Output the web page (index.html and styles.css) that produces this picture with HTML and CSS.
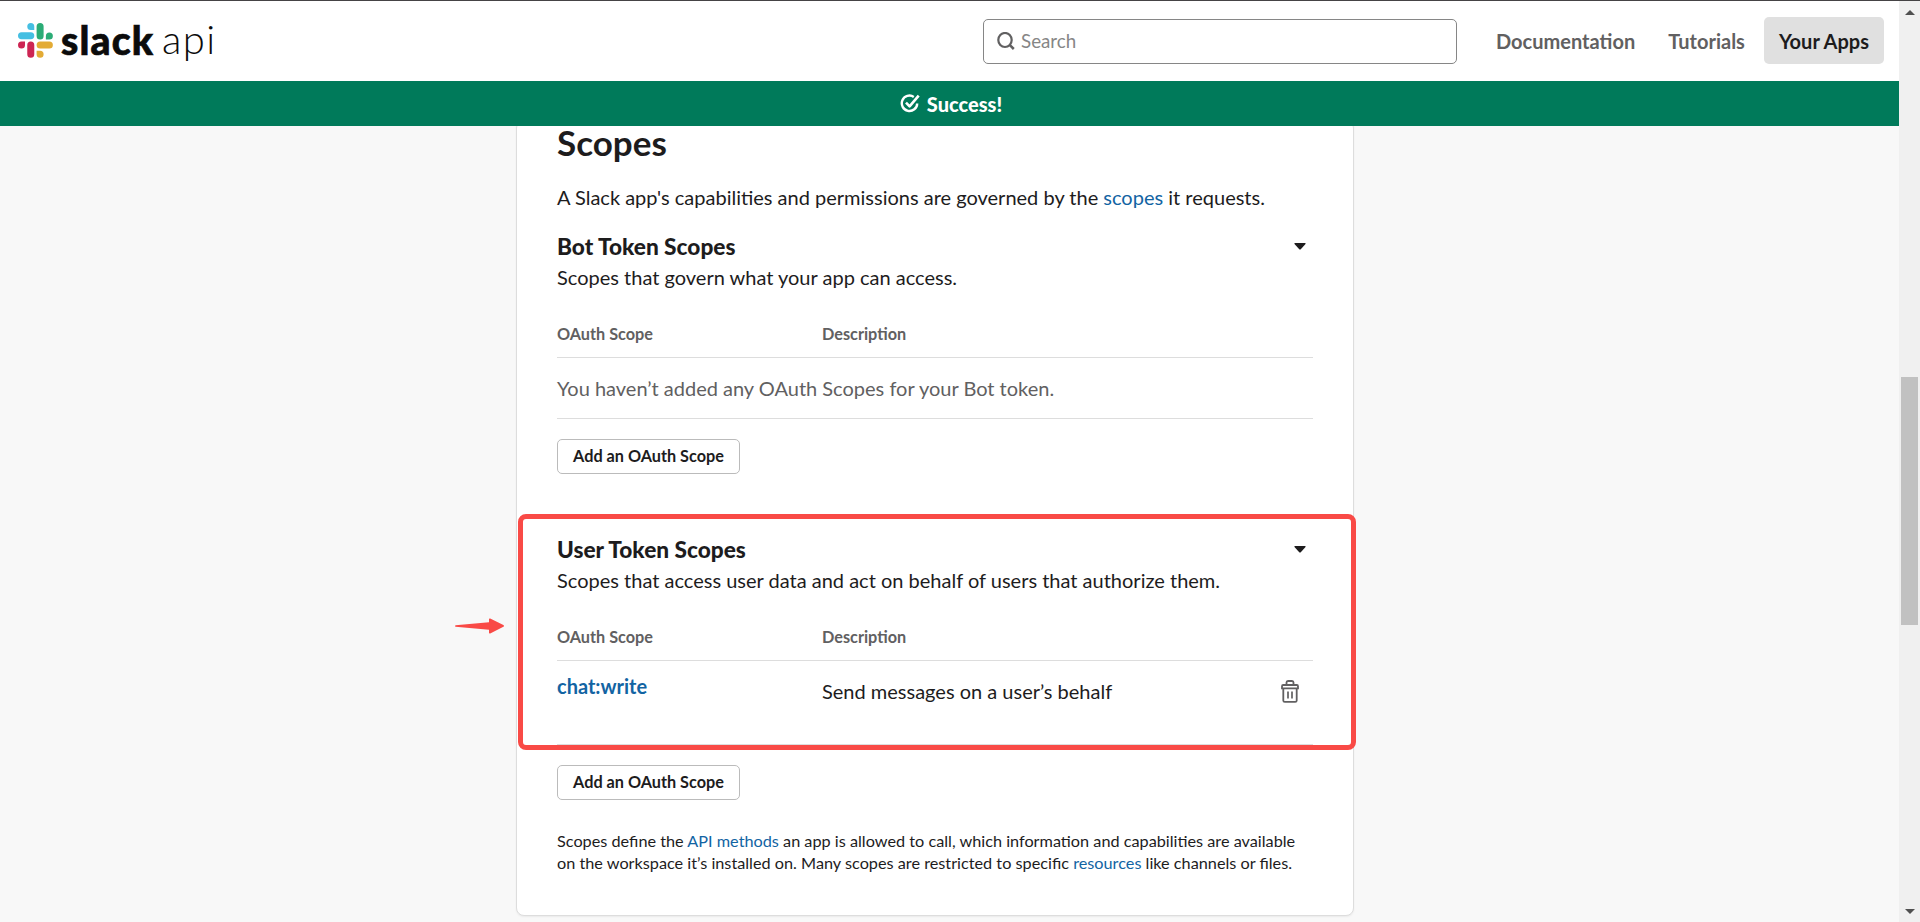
FILE: index.html
```html
<!DOCTYPE html>
<html lang="en">
<head>
<meta charset="utf-8">
<title>Slack API: OAuth &amp; Permissions</title>
<link rel="stylesheet" href="styles.css">
</head>
<body>
<div class="page">
  <header class="header">
    <a class="logo">
      <svg class="logo-mark" viewBox="0 0 54 54" width="35" height="35" aria-hidden="true">
        <path fill="#45bfe2" d="M19.7.1a5.4 5.4 0 0 0 0 10.8h5.4V5.5A5.4 5.4 0 0 0 19.7.1m0 14.3H5.4a5.4 5.4 0 0 0 0 10.8h14.3a5.4 5.4 0 0 0 0-10.8"/>
        <path fill="#2bac76" d="M53.8 19.9a5.4 5.4 0 1 0-10.8 0v5.4h5.4a5.4 5.4 0 0 0 5.4-5.4m-14.3 0V5.5a5.4 5.4 0 1 0-10.8 0v14.4a5.4 5.4 0 1 0 10.8 0"/>
        <path fill="#e3ab35" d="M34.1 53.7a5.4 5.4 0 0 0 0-10.8h-5.4v5.4a5.4 5.4 0 0 0 5.4 5.4m0-14.3h14.3a5.4 5.4 0 0 0 0-10.8H34.1a5.4 5.4 0 0 0 0 10.8"/>
        <path fill="#cd2553" d="M0 33.9a5.4 5.4 0 1 0 10.8 0v-5.4H5.4A5.4 5.4 0 0 0 0 33.9m14.3 0v14.4a5.4 5.4 0 1 0 10.8 0V33.9a5.4 5.4 0 1 0-10.8 0"/>
      </svg>
      <span class="logo-slack">slack</span><span class="logo-api">api</span>
    </a>
    <div class="search">
      <svg class="search-icon" viewBox="0 0 18 18" width="18" height="18" aria-hidden="true"><ellipse cx="8" cy="8" rx="6.7" ry="7" fill="none" stroke="#616061" stroke-width="2.2"/><path d="M12.4 12.6l4.4 4.4" stroke="#616061" stroke-width="2.5"/></svg>
      <span>Search</span>
    </div>
    <nav class="nav">
      <a class="nav-link">Documentation</a>
      <a class="nav-link">Tutorials</a>
      <a class="nav-link nav-apps">Your Apps</a>
    </nav>
  </header>
  <div class="banner">
    <svg class="banner-icon" viewBox="0 0 20 20" width="20" height="20" aria-hidden="true"><path d="M13.8 2.9A7.7 7.7 0 1 0 17.2 9.4" fill="none" stroke="#fff" stroke-width="2.4"/><path d="M6 8.6l3.6 3.8L18.7 1.6" fill="none" stroke="#fff" stroke-width="2.6" stroke-linejoin="round"/></svg>
    <span>Success!</span>
  </div>
  <main class="main">
    <section class="card">
      <h1 class="title">Scopes</h1>
      <p class="intro">A Slack app's capabilities and permissions are governed by the <a>scopes</a> it requests.</p>

      <div class="scope-group">
        <div class="group-head"><h2>Bot Token Scopes</h2><svg class="caret" viewBox="0 0 12 7" width="12" height="7"><path d="M1 0h10q1 0 .5 1L7 6q-1 1-2 0L.5 1Q0 0 1 0z" fill="#1d1c1d"/></svg></div>
        <p>Scopes that govern what your app can access.</p>
        <div class="columns"><span>OAuth Scope</span><span>Description</span></div>
        <div class="empty-row">You haven’t added any OAuth Scopes for your Bot token.</div>
        <button class="btn">Add an OAuth Scope</button>
      </div>

      <div class="scope-group user-group">
        <div class="group-head"><h2>User Token Scopes</h2><svg class="caret" viewBox="0 0 12 7" width="12" height="7"><path d="M1 0h10q1 0 .5 1L7 6q-1 1-2 0L.5 1Q0 0 1 0z" fill="#1d1c1d"/></svg></div>
        <p>Scopes that access user data and act on behalf of users that authorize them.</p>
        <div class="columns"><span>OAuth Scope</span><span>Description</span></div>
        <div class="scope-row">
          <a class="scope-name">chat:write</a>
          <span class="scope-desc">Send messages on a user’s behalf</span>
          <svg class="trash" viewBox="0 0 18 23" width="18" height="23" aria-hidden="true"><g fill="none" stroke="#616061"><path d="M5.5 4.5V2.6q0-1.6 1.5-1.6h4q1.5 0 1.5 1.6v1.9" stroke-width="1.8"/><path d="M1 8.4V6.2q0-1.2 1.2-1.2h13.6q1.2 0 1.2 1.2v2.2z" stroke-width="1.8"/><path d="M2.3 9v11.4q0 1.5 1.5 1.5h10.4q1.5 0 1.5-1.5V9" stroke-width="1.8"/><path d="M7 11.5v7M11 11.5v7" stroke-width="1.7"/></g></svg>
        </div>
        <button class="btn">Add an OAuth Scope</button>
        <div class="highlight"></div>
        <svg class="arrow" viewBox="0 0 50 16" width="50" height="16" aria-hidden="true"><path d="M.5 7.2L34 4.3V1.3Q34 .2 35.2.6L48.4 7.1Q49.6 8 48.4 8.8L35.2 15.4Q34 15.8 34 14.7V11.8L.5 8.8Q-.3 8 .5 7.2z" fill="#f94a46"/></svg>
      </div>

      <p class="note">Scopes define the <a>API methods</a> an app is allowed to call, which information and capabilities are available on the workspace it’s installed on. Many scopes are restricted to specific <a>resources</a> like channels or files.</p>
    </section>
  </main>
</div>
<div class="scrollbar">
  <i class="scroll-up"></i>
  <i class="scroll-thumb"></i>
  <i class="scroll-down"></i>
</div>
</body>
</html>
```
FILE: styles.css
```css
* { box-sizing: border-box; }

body {
  margin: 0;
  height: 922px;
  display: flex;
  overflow: hidden;
  border-top: 1px solid #454345;
  background: #f8f8f8;
  color: #1d1c1d;
  font: 400 20px/30px Lato, sans-serif;
}

h1, h2, p { margin: 0; }
a { color: #1264a3; text-decoration: none; }

.page { width: 1899px; height: 921px; display: flex; flex-direction: column; }

.header {
  height: 80px;
  flex: none;
  display: flex;
  align-items: center;
  padding: 0 15px 2px 18px;
  background: #fff;
}

.logo { display: flex; align-items: center; color: #0b0b0b; line-height: 44px; }
.logo-mark { margin-right: 8px; }
.logo-slack { width: 101px; font-size: 39px; font-weight: 900; letter-spacing: 1.2px; -webkit-text-stroke: .7px #0b0b0b; }
.logo-api { margin-bottom: 2px; font-size: 40px; font-weight: 300; letter-spacing: 1.4px; }

.search {
  width: 474px;
  height: 45px;
  margin: 2px 0 0 auto;
  padding: 0 0 0 13px;
  display: flex;
  align-items: center;
  gap: 6px;
  border: 1px solid #868686;
  border-radius: 5px;
  color: #868686;
  font-size: 18.75px;
}

.nav { display: flex; margin-left: 24px; }
.nav-link {
  height: 47px;
  padding: 0 15px;
  color: #616061;
  font-weight: 700;
  line-height: 49px;
}
.nav-link + .nav-link { margin-left: 3px; }
.nav-link.nav-apps { margin-left: 4px; color: #1d1c1d; background: #e0e0e0; border-radius: 5px; }

.banner {
  height: 45px;
  flex: none;
  display: flex;
  justify-content: center;
  padding: 12px 0 0 3px;
  gap: 7px;
  background: #007a5a;
  color: #fff;
  font-weight: 900;
  line-height: 23px;
}
.banner-icon { margin-top: 1px; }

.main { flex: 1; min-height: 0; overflow: hidden; }

.card {
  width: 838px;
  height: 796px;
  margin: -6px 0 0 516px;
  padding: 0 40px;
  background: #fff;
  border: 1px solid #ddd;
  border-radius: 8px;
  box-shadow: 0 1px 2px rgba(0, 0, 0, .06);
}

.title { font-size: 35px; line-height: 42px; font-weight: 700; }
.intro { margin: 19px 0 18px; }

.scope-group { position: relative; }
.group-head { display: flex; justify-content: space-between; height: 32px; padding-right: 7px; }
.group-head h2 { padding-top: 1px; font-size: 22.65px; line-height: 32px; font-weight: 900; }
.caret { margin-top: 13px; }

.columns {
  display: grid;
  grid-template-columns: 265px 1fr;
  height: 36px;
  margin-top: 30px;
  border-bottom: 1px solid #ddd;
  color: #616061;
  font-size: 16.25px;
  font-weight: 700;
  line-height: 24px;
}

.empty-row { padding: 15px 0; border-bottom: 1px solid #ddd; color: #616061; }

.btn {
  display: block;
  width: 183px;
  height: 35px;
  margin-top: 20px;
  padding: 0 0 2px;
  border: 1px solid #bbb;
  border-radius: 5px;
  background: #fff;
  color: #1d1c1d;
  font: 700 16.25px/31px Lato, sans-serif;
}

.user-group { margin-top: 59px; }

.scope-row {
  display: grid;
  grid-template-columns: 265px 1fr 32px;
  height: 84px;
  padding-top: 10px;
  border-bottom: 1px solid #ddd;
}
.scope-name { font-weight: 700; }
.scope-desc { padding-top: 5px; }
.trash { margin-top: 9px; }

.highlight {
  position: absolute;
  left: -39px;
  top: -19px;
  width: 838px;
  height: 236px;
  border: 5px solid #f94a46;
  border-radius: 8px;
}
.arrow { position: absolute; left: -102px; top: 85px; }

.note { margin-top: 30px; font-size: 16.25px; line-height: 22px; }

.scrollbar {
  width: 21px;
  height: 921px;
  display: flex;
  flex-direction: column;
  align-items: center;
  background: #f0f0f0;
}
.scroll-up { margin-top: 9px; border: 5px solid transparent; border-top: 0; border-bottom-color: #505050; }
.scroll-thumb { width: 17px; height: 248px; margin-top: 362px; background: #c1c1c1; }
.scroll-down { margin-top: auto; margin-bottom: 8px; border: 5px solid transparent; border-bottom: 0; border-top-color: #505050; }
```
